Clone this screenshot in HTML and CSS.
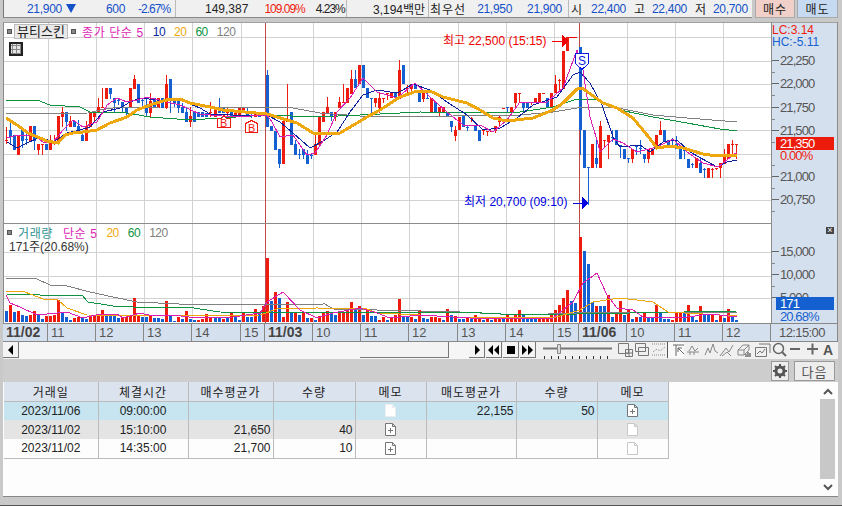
FILE: index.html
```html
<!DOCTYPE html>
<html lang="ko">
<head>
    <meta charset="UTF-8">
    <title>차트</title>
    <link rel="stylesheet" href="styles.css">
</head>
<body>
    <div class="app">
        <div class="topbar">
            <div class="info">
                <div class="cell cell-price blue">
                    <span>21,900</span><span class="tri"></span><span class="gap-30">600</span><span class="gap-13 tight">-2.67%</span>
                </div>
                <div class="cell cell-volume">
                    <span>149,387</span><span class="gap-16 red tight">109.09%</span><span class="gap-11 tight">4.23%</span>
                </div>
                <div class="cell cell-amount"><span>3,194백만</span></div>
                <div class="cell cell-quote">
                    <span class="wide">최우선</span><span class="gap-11 blue">21,950</span><span class="gap-15 blue">21,900</span>
                </div>
                <div class="cell cell-ohl">
                    <span>시</span><span class="gap-9 blue">22,400</span><span class="gap-8">고</span><span class="gap-7 blue">22,400</span><span class="gap-8">저</span><span class="gap-7 blue">20,700</span>
                </div>
            </div>
            <button class="trade buy">매수</button>
            <button class="trade sell">매도</button>
        </div>

        <div class="chart">
            <svg id="plot" class="plot" width="835" height="301" viewBox="3 22 835 301"></svg>
            <div class="legend legend-price">
                <span class="dot"></span>
                <span class="skin">뷰티스킨</span>
                <span class="dot"></span>
                <span class="ma5 gap-6 wide-s">종가 단순 5</span>
                <span class="ma10 gap-9 num">10</span>
                <span class="ma20 gap-9 num">20</span>
                <span class="ma60 gap-9 num">60</span>
                <span class="ma120 gap-9 num">120</span>
            </div>
            <div class="grid-icon"></div>
            <div class="legend legend-volume">
                <span class="dot"></span>
                <span class="teal wide-s">거래량</span>
                <span class="ma5 gap-9 wide-s">단순 5</span>
                <span class="ma20 gap-9 num">20</span>
                <span class="ma60 gap-9 num">60</span>
                <span class="ma120 gap-9 num">120</span>
            </div>
            <div class="legend-sub">171주(20.68%)</div>
            <div class="close-box">×</div>

            <div class="xaxis">
                <span class="day">11/02</span><span>11</span><span>12</span><span>13</span><span>14</span><span>15</span>
                <span class="day">11/03</span><span>10</span><span>11</span><span>12</span><span>13</span><span>14</span><span>15</span>
                <span class="day">11/06</span><span>10</span><span>11</span><span>12</span><span class="time">12:15:00</span>
            </div>
        </div>

        <div class="controls">
            <button class="ctl-btn"><svg width="8" height="10"><path d="M6 0v10L1 5z"/></svg></button>
            <div class="track"><div class="thumb"></div></div>
            <div class="player">
                <button class="ctl-btn"><svg width="8" height="10"><path d="M2 0v10l5-5z"/></svg></button>
                <button class="ctl-btn"><svg width="11" height="10"><path d="M5 0v10L0 5zM11 0v10L6 5z"/></svg></button>
                <button class="ctl-btn"><svg width="10" height="10"><path d="M1 1h8v8H1z"/></svg></button>
                <button class="ctl-btn"><svg width="11" height="10"><path d="M0 0v10l5-5zM6 0v10l5-5z"/></svg></button>
            </div>
            <div class="slider">
                <svg width="72" height="16">
                    <path d="M1 5.500h69" stroke="#777" stroke-width="2" fill="none"/>
                    <path d="M15.500 1.500h3v9h-3z" fill="#ddd" stroke="#888"/>
                    <path d="M2.500 13v3M9.500 13v3M16.500 13v3M23.500 13v3M30.500 13v3M37.500 13v3M44.500 13v3M51.500 13v3M58.500 13v3M65.500 13v3" stroke="#333" fill="none"/>
                </svg>
            </div>
            <div class="tools">
                <svg width="202" height="16" viewBox="0 0 202 16" fill="none" stroke="#888">
                    <path d="M50 0h16v16H50z" fill="#fafafa" stroke="none"/>
                    <path d="M.5 1.500h10v10H.5zM7.500 7.500h7v7h-7zM7.500 11h7M11 7.500v7" stroke="#777"/>
                    <path d="M17.500 1.500h10v8h-10zM20.500 5.500h10v8h-10z" stroke="#777"/>
                    <path d="M34 2h14M34 13h14M35 10l4-3 3 2 5-4" stroke-dasharray="1 1"/>
                    <path d="M49.500 0v16" stroke="#555"/>
                    <path d="M55 3h11M58 14V3M60 6l6 6M60 6h4M60 6v4" stroke="#666"/>
                    <path d="M69 10h12M71 9l3-5 3 5 3-3M72 13v-3M76 13v-3"/>
                    <path d="M87 13l3-7 2 5 3-9 2 7 3 2"/>
                    <path d="M102 14l6-8 3 4 4-7M104 14l5-4 4 4"/>
                    <path d="M120 8l5-5h6v5l-5 5h-6zM120 8h6v5M126 8l5-5"/><path d="M128 15v-3M130 15v-5M132 15v-4" stroke="#333"/>
                    <path d="M137.500 5.500h11v9h-11zM141 2h11v9M139 12l3-3 2 2 3-4" stroke="#777"/>
                    <circle cx="160.500" cy="6.500" r="5" stroke="#666" stroke-width="1.500"/><path d="M164 10l4 4" stroke="#666" stroke-width="2"/>
                    <path d="M172 7h10M189 7h11M194.500 1.500v11" stroke="#666" stroke-width="2"/>
                </svg>
                <span class="tool-a">A</span>
            </div>
        </div>

        <div class="strip">
            <button class="strip-btn gear">
                <svg width="14" height="14" viewBox="0 0 14 14"><circle cx="7" cy="7" r="4" fill="none" stroke="#555" stroke-width="3"/><path d="M7 0v3M7 11v3M0 7h3M11 7h3M2 2l2 2M10 10l2 2M12 2l-2 2M4 10l-2 2" stroke="#555" stroke-width="2"/></svg>
            </button>
            <button class="strip-btn next">다음</button>
        </div>

        <div class="list">
            <table class="trades">
                <colgroup>
                    <col class="c-date"><col class="c-time"><col class="c-avg"><col class="c-qty"><col class="c-memo">
                    <col class="c-time"><col class="c-qty2"><col class="c-memo">
                </colgroup>
                <thead>
                    <tr><th>거래일</th><th>체결시간</th><th>매수평균가</th><th>수량</th><th>메모</th><th>매도평균가</th><th>수량</th><th>메모</th></tr>
                </thead>
                <tbody>
                    <tr class="row-sel">
                        <td class="mid">2023/11/06</td><td class="mid">09:00:00</td><td></td><td></td>
                        <td class="mid"><svg class="doc doc-blank"><use href="#doc"/></svg></td>
                        <td>22,155</td><td>50</td>
                        <td class="mid"><svg class="doc"><use href="#doc"/><use href="#plus"/></svg></td>
                    </tr>
                    <tr class="row-alt">
                        <td class="mid">2023/11/02</td><td class="mid">15:10:00</td><td>21,650</td><td>40</td>
                        <td class="mid"><svg class="doc"><use href="#doc"/><use href="#plus"/></svg></td>
                        <td></td><td></td>
                        <td class="mid"><svg class="doc doc-empty"><use href="#doc"/></svg></td>
                    </tr>
                    <tr>
                        <td class="mid">2023/11/02</td><td class="mid">14:35:00</td><td>21,700</td><td>10</td>
                        <td class="mid"><svg class="doc"><use href="#doc"/><use href="#plus"/></svg></td>
                        <td></td><td></td>
                        <td class="mid"><svg class="doc doc-empty"><use href="#doc"/></svg></td>
                    </tr>
                </tbody>
            </table>
            <div class="vscroll">
                <div class="vscroll-btn"><svg width="10" height="7"><path d="M1 6l4-4 4 4" fill="none" stroke="#555" stroke-width="2"/></svg></div>
                <div class="vscroll-bar"></div>
                <div class="vscroll-btn"><svg width="10" height="7"><path d="M1 1l4 4 4-4" fill="none" stroke="#555" stroke-width="2"/></svg></div>
            </div>
        </div>
    </div>

    <svg width="0" height="0" class="defs">
        <defs>
            <path id="doc" d="M.5.5h7l3 3v9H.5z M7.500.5v3h3"/>
            <path id="plus" d="M3 7.500h5M5.500 5v5"/>
        </defs>
    </svg>

    <script src="script.js"></script>
</body>
</html>
```

FILE: styles.css
```css
* {
    box-sizing: border-box;
}

html, body {
    margin: 0;
    height: 100%;
}

body {
    background-color: #c9c9c9;
    color: #222;
    font-family: "Liberation Sans", "Noto Sans CJK KR", sans-serif;
    font-size: 12px;
    overflow: hidden;
}

button {
    font: inherit;
    padding: 0;
}

.app {
    display: flex;
    flex-direction: column;
    width: 842px;
    height: 506px;
    padding: 0 4px 0 3px;
    border-bottom: 1px solid #555;
}

.blue { color: #1450c8; letter-spacing: -0.3px; }
.red { color: #ee1c0e; }
.tight { letter-spacing: -1px; }
.wide { letter-spacing: 1px; }
.wide-s { letter-spacing: 0.6px; }
.num { letter-spacing: -0.5px; }
.gap-6 { margin-left: 6px; }
.gap-7 { margin-left: 7px; }
.gap-8 { margin-left: 8px; }
.gap-9 { margin-left: 9px; }
.gap-11 { margin-left: 11px; }
.gap-13 { margin-left: 13px; }
.gap-15 { margin-left: 15px; }
.gap-16 { margin-left: 16px; }
.gap-30 { margin-left: 30px; }

/* top quote bar */
.topbar {
    display: flex;
    height: 18px;
    margin-bottom: 4px;
}

.info {
    display: flex;
    width: 749px;
    background-color: #f0f0f0;
    border-left: 1px solid #777;
    border-bottom: 1px solid #888;
}

.cell {
    display: flex;
    align-items: center;
    border-right: 1px solid #bbb;
    white-space: nowrap;
}

.cell-price { width: 172px; padding-left: 23px; }
.cell-volume { width: 171px; padding-left: 29px; }
.cell-amount { width: 82px; padding-left: 26px; }
.cell-quote { width: 140px; padding-left: 1px; }
.cell-ohl { flex: 1; padding-left: 2px; border-right: 0; }

.tri {
    width: 0;
    height: 0;
    margin-left: 4px;
    border-left: 5px solid transparent;
    border-right: 5px solid transparent;
    border-top: 9px solid #1450c8;
}

.trade {
    height: 18px;
    border: 1px solid #aaa;
    border-top: 0;
    color: #222;
    letter-spacing: 1px;
}

.buy {
    width: 40px;
    margin-left: 3px;
    background-color: #f0d0c8;
}

.sell {
    width: 41px;
    margin-left: 2px;
    background-color: #c6dbf1;
}

/* chart panel */
.chart {
    position: relative;
    width: 835px;
    height: 320px;
    flex: none;
    background-color: #fff;
    border-bottom: 1px solid #888;
}

.plot {
    display: block;
    shape-rendering: crispEdges;
    font-family: "Liberation Sans", "Noto Sans CJK KR", sans-serif;
}

.axis-label {
    font-size: 13px;
    letter-spacing: -0.9px;
    fill: #555;
}

.corner-label {
    font-size: 12px;
    letter-spacing: 0;
}

.legend, .legend-sub {
    position: absolute;
    left: 4px;
    display: flex;
    align-items: center;
    white-space: nowrap;
}

.legend-price { top: 2px; height: 15px; }
.legend-volume { top: 203px; height: 15px; }
.legend-sub { top: 215px; left: 6px; color: #333; }

.dot {
    width: 5px;
    height: 5px;
    background-color: #888;
    border: 1px solid #555;
}

.skin {
    width: 54px;
    height: 15px;
    margin: 0 3px 0 2px;
    text-align: center;
    line-height: 14px;
    font-size: 13px;
    background-color: #e9e9e9;
    border: 1px solid #bbb;
}

.ma5 { color: #dc1fb4; }
.ma10 { color: #0c1f9c; }
.ma20 { color: #eea70c; }
.ma60 { color: #0e9440; }
.ma120 { color: #808080; }
.teal { color: #2f9292; margin-left: 6px; }
.legend-volume .ma5 { margin-left: 10px; }

.grid-icon {
    position: absolute;
    top: 20px;
    left: 6px;
    width: 14px;
    height: 14px;
    border: 2px solid #222;
    background-color: #e4e4e4;
    background-image:
        linear-gradient(to right, #888 1px, transparent 1px),
        linear-gradient(to bottom, #888 1px, transparent 1px);
    background-size: 4px 4px;
    background-position: 1px 1px;
}

.close-box {
    position: absolute;
    top: 205px;
    left: 823px;
    width: 8px;
    height: 7px;
    background-color: #444;
    color: #fff;
    font-size: 9px;
    line-height: 7px;
    text-align: center;
}

.xaxis {
    display: grid;
    grid-template-columns: 45px 48px 48px 48px 49px 24px 48px 48px 48px 49px 48px 48px 25px 48px 48px 48px 48px 1fr;
    height: 18px;
    background-color: #d5e0ee;
    border-top: 1px solid #888;
    color: #555;
    font-size: 13px;
    line-height: 17px;
}

.xaxis span {
    padding-left: 3px;
    border-right: 1px solid #888;
    white-space: nowrap;
    overflow: hidden;
}

.xaxis .day {
    font-weight: bold;
    font-size: 14px;
    color: #444;
}

.xaxis .time {
    padding-left: 8px;
    border-right: 1px solid #888;
    letter-spacing: -0.6px;
}

/* scroll row and toolbar */
.controls {
    display: flex;
    align-items: stretch;
    height: 17px;
    background-color: #f0f0f0;
}

.ctl-btn {
    display: flex;
    align-items: center;
    justify-content: center;
    width: 16px;
    height: 16px;
    background-color: #f4f4f4;
    border: 0;
    border-right: 1px solid #777;
    border-bottom: 1px solid #777;
}

.track {
    position: relative;
    width: 450px;
    background-color: #f6f6f6;
    background-image: radial-gradient(#ddd 0.5px, transparent 0.5px);
    background-size: 2px 2px;
}

.thumb {
    position: absolute;
    top: 0;
    left: 341px;
    width: 89px;
    height: 16px;
    background-color: #f3f3f3;
    border-right: 1px solid #777;
    border-bottom: 1px solid #777;
}

.player {
    display: flex;
    gap: 1px;
}

.slider {
    width: 77px;
    padding: 1px 0 0 6px;
}

.tools {
    display: flex;
    align-items: flex-start;
    flex: 1;
    padding-left: 5px;
}

.tool-a {
    margin-left: 3px;
    font-size: 14px;
    font-weight: bold;
    line-height: 16px;
    color: #555;
}

.strip {
    display: flex;
    justify-content: flex-end;
    gap: 5px;
    height: 23px;
    padding: 2px 3px 0 0;
    background-color: #cdcdcd;
}

.strip-btn {
    display: flex;
    align-items: center;
    justify-content: center;
    height: 20px;
    background-color: #ededed;
    border: 1px solid #999;
    color: #555;
    font-size: 13px;
    letter-spacing: 1px;
}

.gear { width: 18px; }
.next { width: 41px; }

/* trade list */
.list {
    display: flex;
    height: 115px;
    padding: 0 3px 0 1px;
    background-color: #fdfdfd;
    border-bottom: 1px solid #888;
}

.trades {
    flex: none;
    width: 664px;
    height: 76px;
    border-collapse: collapse;
    table-layout: fixed;
    color: #222;
}

.c-date { width: 94px; }
.c-time { width: 90px; }
.c-avg { width: 85px; }
.c-qty { width: 82px; }
.c-memo { width: 71px; }
.c-qty2 { width: 81px; }

.trades th {
    height: 19px;
    padding: 0;
    font-weight: normal;
    letter-spacing: 1px;
    background-color: #dbe3ee;
    border-right: 1px solid #bbb;
    border-bottom: 1px solid #bbb;
}

.trades td {
    height: 19px;
    padding: 0 2px 0 0;
    text-align: right;
    border-right: 1px solid #bbb;
}

.trades tbody tr:last-child td {
    border-bottom: 1px solid #bbb;
}

.trades td.mid {
    padding: 0;
    text-align: center;
}

.row-sel { background-color: #c6e5f1; }
.row-alt { background-color: #e4e4e4; }

.doc {
    display: block;
    width: 11px;
    height: 13px;
    margin: 0 auto;
    fill: #fff;
    stroke: #777;
}

.doc-blank { stroke: #eee; }
.doc-empty { stroke: #c8c8c8; }

.defs {
    position: absolute;
}

.vscroll {
    display: flex;
    flex-direction: column;
    width: 15px;
    height: 112px;
    margin: 1px 0 0 auto;
}

.vscroll-btn {
    display: flex;
    align-items: center;
    justify-content: center;
    height: 16px;
}

.vscroll-bar {
    flex: 1;
    background-color: #c8c8c8;
}
```

FILE: script.js
```js
// candles: [color, body top, body bottom, wick top, wick bottom]
const candles = [
    ['r',140,141,127,144],['b',130,137,120,145],['b',135,150],['r',135,155],['b',130,141,130,148],['b',139,140,130,145],
    ['r',126,141],['b',126,141,126,150],['r',144,150,144,155],['r',144,145,144,155],['b',144,150],['r',140,150,135,150],
    ['r',141,142,135,145],['r',116,141],['r',112,117,107,127],['b',112,122,112,131],['r',121,127,116,127],['b',121,127],
    ['b',126,131,120,131],['b',135,141,131,141],['r',126,141,121,141],['r',112,127],['r',112,117,112,121],['r',107,113,98,113],
    ['r',107,108,88,107],['r',88,99],['b',88,94,88,99],['b',98,103,98,112],['b',100,101,98,105],['b',102,108,102,112],
    ['b',107,113,107,117],['r',88,108],['r',79,89,75,89],['b',84,103],['b',100,101,98,108],['b',107,113,98,117],
    ['r',101,113,93,117],['b',98,107],['r',98,108],['b',98,108],['r',84,108,75,109],['b',79,99,79,113],['b',98,103,98,107],
    ['b',98,108,98,113],['b',107,113,103,113],['b',112,122,107,122],['r',116,122,107,127],['b',112,122],['b',112,117],
    ['b',112,117],['b',113,117],['r',112,113,102,117],['r',107,117],['b',107,113,98,113],['b',107,113],['r',112,113,108,117],
    ['b',112,117],['r',112,117],['r',107,117],['r',107,113],['b',112,117,107,117],['b',113,114,113,118],['r',112,117],
    ['b',114,117],['r',112,113,112,116],['b',75,127,70,127],['b',126,131],['b',131,150],['b',149,164,149,168],['r',121,164],
    ['r',121,122,84,122],['b',112,145],['b',144,155,140,155],['b',154,155,149,159],['b',149,155,149,159],['b',155,164,150,164],
    ['b',155,156,154,159],['r',144,155,135,155],['r',116,145],['r',112,122],['r',107,113,97,113],['b',112,117,112,121],
    ['r',112,117,112,121],['r',102,108,97,108],['r',102,103,84,103],['r',88,103],['r',79,94,70,94],['b',79,88,70,88],
    ['r',65,84],['b',65,88],['b',88,98],['b',98,99,98,113],['r',98,103,98,107],['r',98,108,93,113],['r',98,99,98,103],
    ['r',93,94,93,100],['r',93,98],['b',93,98],['r',70,99,60,99],['b',65,84],['r',88,89,85,93],['r',84,89,84,93],['b',84,89],
    ['b',93,102],['r',93,99,93,102],['b',98,99,92,99],['r',98,113],['b',102,113],['r',107,113,107,117],['r',107,113],
    ['b',112,117],['b',121,127,121,132],['r',130,136,126,141],['r',117,130],['b',116,127],['b',127,128,126,131],
    ['r',118,119,117,122],['b',126,131],['b',130,141],['r',130,131,130,135],['r',131,132,131,136],['r',131,132,131,132],
    ['r',126,131,126,133],['r',117,122,115,127],['r',108,109,108,109],['b',107,108,107,113],['r',107,113],['r',93,103,93,108],
    ['r',93,94,93,103],['b',102,108,102,112],['b',102,108],['r',102,103,102,105],['r',98,102],['r',93,102],['r',93,94,93,94],
    ['b',98,108],['r',93,108],['r',84,93,75,93],['r',80,81,79,90],['r',51,89],['r',37,51],['r',37,38,37,38],['r',37,38,37,38],
    ['b',47,130,47,155],['b',130,168],['b',167,168,167,205],['r',144,168],['b',158,164,140,168],['r',126,168,121,168],
    ['r',140,141,140,147],['r',135,142,135,159],['b',137,138,130,142],['b',130,145],['b',145,146,145,158],['b',149,159],
    ['b',158,159,158,163],['r',149,159,149,163],['b',146,147,145,155],['b',148,149,140,154],['b',154,159,154,163],
    ['r',149,159,149,163],['r',149,155],['r',135,149],['r',130,135,121,135],['b',130,141],['b',140,145],['b',145,146,138,145],
    ['b',144,149,136,149],['b',149,159,145,159],['b',150,151,149,159],['b',159,168],['b',164,165,163,168],['r',158,168],
    ['b',163,173,158,173],['b',169,170,168,178],['r',168,178],['r',169,170,168,178],['r',168,169,168,170],['r',163,168,163,178],
    ['r',154,164,149,164],['r',144,159],['r',144,145,140,155],['r',144,145,144,159]
];

// volume heights, same order as candles ('r'/'b' taken per bar)
const volumes = ('11b 17r 10b 11r 7b 6b 7r 11r 7b 3b 6r 6r 7r 22r 10b 5b 2b 4r 5r 4b 3b 6r 6r 8r 12r 6b 6b 6b 4b 4r 5r 7r ' +
    '24r 7r 5b 5b 7r 4b 4b 3b 21r 6b 1b 5r 3b 11r 3b 2b 2r 3r 8r 4r 5b 4b 3r 5b 10r 5b 2b 10r 5b 5b 13r 10b 16r 64r 21b 30r ' +
    '24b 5r 20r 9b 9r 7b 10r 4b 4r 2b 6r 10r 11r 8b 7b 9r 9r 12r 20r 14b 16r 7b 12r 6b 6b 2r 5r 2b 4r 7r 23r 5b 5b 5r 3b 12r ' +
    '4b 3b 5r 5r 4r 2b 13r 7b 6r 3b 3b 5r 3b 7r 3r 2b 5r 2b 3r 5r 3b 7r 3r 7r 12r 7b 3b 5b 4b 3r 4r 5r 7r 12r 17r 24r 32r ' +
    '21b 19b 85r 71b 58b 20b 16r 16b 16b 27r 5b 10r 21r 7b 13r 3b 5r 5b 10r 5b 5b 17r 10b 3b 3b 2r 9r 9r 9b 17r 5b 2b 16r ' +
    '7b 7b 7r 2b 7r 4b 13r 5b 2b').split(' ');

const colors = { r: '#ee1c0e', b: '#1560d0', mag: '#dc1fb4', navy: '#0c1f9c', org: '#eea70c', grn: '#0e9440', gry: '#808080' };

const priceLines = [
    { color: colors.gry, w: 1, pts: '6,113 43,113 50,114 88,113 100,110 113,108 160,107 213,107 277,107 293,108 320,113 360,116 453,116 520,115 553,112 577,108 613,107 653,115 687,118 737,122' },
    { color: colors.grn, w: 1, pts: '6,100 37,100 50,105 80,107 90,112 127,113 150,117 190,120 267,115 317,117 360,115 420,112 487,113 520,112 553,107 577,99 597,100 620,110 653,117 687,123 720,129 737,131' },
    { color: colors.navy, w: 1, pts: '7,142 17,148 23,145 40,137 53,142 67,133 80,130 90,127 103,112 120,108 130,102 140,98 157,100 180,100 200,108 210,114 233,115 267,115 280,122 293,133 310,148 323,141 337,132 350,112 363,95 377,90 397,93 403,90 413,84 430,90 447,102 467,115 483,130 500,128 517,118 533,105 557,97 573,75 580,72 590,83 602,105 613,137 620,147 640,145 650,152 663,142 677,140 690,152 717,167 727,162 737,160' },
    { color: colors.mag, w: 1, pts: '7,138 17,135 33,135 43,142 53,142 63,130 73,120 83,127 97,122 107,105 117,98 127,102 137,100 147,97 167,102 180,105 200,114 233,117 267,115 272,122 280,137 293,135 307,155 315,153 327,135 337,112 350,98 363,78 377,92 397,98 415,83 430,97 447,112 463,125 480,125 493,132 507,120 520,102 547,102 563,88 577,50 583,70 590,117 597,140 600,152 607,145 613,139 623,143 637,152 657,147 673,139 687,152 703,163 718,167 737,152' },
    { color: colors.org, w: 3, pts: '6,118 17,125 28,133 47,141 58,143 65,135 73,133 83,132 97,130 110,123 127,117 137,110 150,105 170,99 180,99 190,103 200,105 210,107 223,110 267,114 277,117 297,123 313,133 340,133 357,123 367,117 380,110 400,97 417,91 430,91 443,97 467,103 480,110 493,118 507,121 533,118 553,110 563,103 577,89 582,88 603,103 617,108 633,118 647,135 657,148 670,146 683,148 703,154 717,156 737,155' }
];

const volumeLines = [
    { color: colors.gry, w: 1, pts: '6,278 23,278 37,279 50,285 67,286 90,292 113,297 137,302 200,305 325,304 333,309 420,311 460,312 520,315 577,313 737,312' },
    { color: colors.grn, w: 1, pts: '6,294 40,295 82,295 88,302 113,306 133,307 187,307 220,312 267,313 420,312 463,312 520,315 577,314 737,311' },
    { color: colors.org, w: 1, pts: '6,291 25,292 43,299 58,300 67,308 87,315 200,316 260,315 277,309 317,308 367,309 377,313 420,315 453,317 553,318 580,310 593,302 620,298 653,302 668,312 737,316' },
    { color: colors.mag, w: 1, pts: '6,295 10,303 20,307 37,315 57,313 67,312 83,318 100,314 117,314 123,318 140,313 153,316 173,315 197,318 233,317 260,313 267,302 283,292 300,310 317,318 333,313 360,308 377,313 390,318 420,315 470,318 553,318 573,302 583,283 597,273 607,295 617,308 633,310 643,317 687,317 710,314 737,317' }
];

const gridX = [48, 96, 144, 192, 241, 313, 361, 409, 458, 506, 554, 627, 675, 723];
const gridY = [37, 61, 84, 107, 130, 154, 177, 200, 252, 276, 298];
const dayLines = [265, 579];

const priceTicks = [
    [60, '22,250'], [83, '22,000'], [107, '21,750'], [130, '21,500'], [176, '21,000'], [199, '20,750'],
    [251, '15,000'], [274, '10,000'], [297, '5,000']
];

let out = '';

function rect(x, y, w, h, fill) {
    out += `<rect x="${x}" y="${y}" width="${w}" height="${h}" fill="${fill}"/>`;
}

function label(x, y, text, fill, size = 12) {
    out += `<text x="${x}" y="${y}" font-size="${size}" fill="${fill}">${text}</text>`;
}

function candleX(i) {
    return 5 + 4 * i + (i >= 52 ? 1 : 0) + (i >= 143 ? 1 : 0);
}

function drawLines(lines) {
    lines.forEach(l => {
        out += `<polyline points="${l.pts}" fill="none" stroke="${l.color}" stroke-width="${l.w}"/>`;
    });
}

rect(3, 22, 835, 301, '#fff');
gridX.forEach(x => rect(x, 22, 1, 301, '#d2d2d2'));
gridY.forEach(y => rect(3, y, 768, 1, '#d2d2d2'));
dayLines.forEach(x => rect(x, 22, 1, 301, '#c04848'));
rect(3, 223, 768, 1, '#8c8c8c');
rect(3, 22, 835, 1, '#a0a0a0');
rect(3, 22, 1, 301, '#8c8c8c');

candles.forEach((c, i) => {
    const x = candleX(i);
    const fill = colors[c[0]];
    if (c[3] !== undefined) rect(x + 1, c[3], 1, c[4] - c[3], fill);
    rect(x, c[1], 3, c[2] - c[1], fill);
});

volumes.forEach((v, i) => {
    const h = parseInt(v, 10);
    rect(candleX(i), 322 - h, 3, h, colors[v.slice(-1)]);
});
drawLines(priceLines);
drawLines(volumeLines);

// buy / sell markers
out += '<path d="M217.500 127.500v-9h4l2.500-3 2.500 3h3.500v9z" fill="#fff" stroke="#ee1c0e"/>';
label(220, 127, 'B', '#ee1c0e', 11);
out += '<path d="M245.500 132.500v-9l6-3 6 3v9z" fill="#fff" stroke="#ee1c0e"/>';
label(248, 132, 'B', '#ee1c0e', 11);
out += '<path d="M575.500 53.500h13v10l-6.500 6-6.500-6z" fill="#fff" stroke="#0b18e0"/>';
label(578, 65, 'S', '#0b18e0');

// high / low notes
label(443, 45, '최고 22,500 (15:15)', '#f00000');
rect(552, 41, 10, 1, '#f00000');
out += '<path d="M562 35v12l7-6z" fill="#f00000"/>';
rect(569, 37, 7, 1, '#f00000');
label(464, 206, '최저 20,700 (09:10)', '#0000e0');
rect(573, 203, 9, 1, '#0000e0');
out += '<path d="M582 197v12l7-6z" fill="#0000e0"/>';

// value axis
rect(771, 23, 67, 300, '#d5e0ee');
rect(771, 22, 1, 301, '#8c8c8c');
rect(837, 22, 1, 301, '#8c8c8c');
priceTicks.forEach(([y, text]) => {
    rect(772, y, 7, 1, '#666');
    out += `<text x="780" y="${y + 5}" class="axis-label">${text}</text>`;
});
[72, 95, 119, 142, 165, 188, 211, 263, 286].forEach(y => rect(772, y, 3, 1, '#888'));
out += '<text x="772" y="34" class="axis-label corner-label" style="fill:#ee1c0e">LC:3.14</text>';
out += '<text x="772" y="46" class="axis-label corner-label" style="fill:#1560d0">HC:-5.11</text>';
rect(776, 137, 58, 13, '#ec1b0b');
out += '<text x="780" y="148" class="axis-label" style="fill:#fff">21,350</text>';
out += '<text x="780" y="160" class="axis-label" style="fill:#ee1c0e">0.00%</text>';
rect(776, 297, 58, 13, '#1560d0');
out += '<text x="780" y="308" class="axis-label" style="fill:#fff">171</text>';
out += '<text x="780" y="321" class="axis-label" style="fill:#1560d0">20.68%</text>';

document.getElementById('plot').innerHTML = out;
```
